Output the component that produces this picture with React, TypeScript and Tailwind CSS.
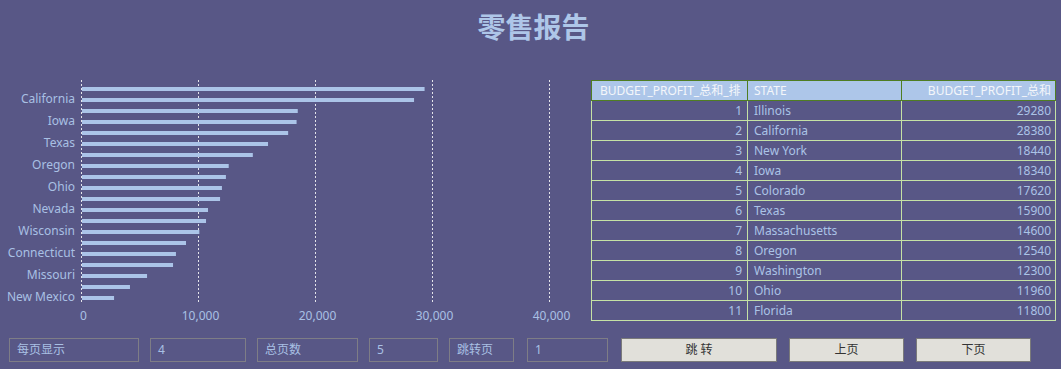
import React from "react";

const bars = [
  29280, 28380, 18440, 18340, 17620, 15900, 14600, 12540, 12300, 11960,
  11800, 10770, 10600, 10030, 8890, 8030, 7780, 5560, 4100, 2740,
];

const labels = [
  "California",
  "Iowa",
  "Texas",
  "Oregon",
  "Ohio",
  "Nevada",
  "Wisconsin",
  "Connecticut",
  "Missouri",
  "New Mexico",
];

const rows = [
  [1, "Illinois", 29280],
  [2, "California", 28380],
  [3, "New York", 18440],
  [4, "Iowa", 18340],
  [5, "Colorado", 17620],
  [6, "Texas", 15900],
  [7, "Massachusetts", 14600],
  [8, "Oregon", 12540],
  [9, "Washington", 12300],
  [10, "Ohio", 11960],
  [11, "Florida", 11800],
] as const;

const X0 = 81;
const PX = 117 / 10000;

function BarChart() {
  const ticks = [0, 10000, 20000, 30000, 40000];
  return (
    <svg width={591} height={258} viewBox="0 80 591 258" className="shrink-0">
      {ticks.map((t) => {
        const x = X0 + t * PX + 0.5;
        return (
          <g key={t}>
            <line x1={x} x2={x} y1={80} y2={302} stroke="#e4e4ea" strokeWidth={1} strokeDasharray="2 2" />
            <text x={x + 2} y={317} fill="#a9c0e4" fontSize={12} textAnchor="middle" dominantBaseline="middle">
              {t.toLocaleString("en-US")}
            </text>
          </g>
        );
      })}
      {bars.map((v, i) => (
        <rect key={i} x={X0 + 1} y={87 + i * 11} width={v * PX} height={4} fill="#abc4e8" />
      ))}
      {labels.map((l, i) => (
        <text
          key={l}
          x={75}
          y={100 + i * 22}
          fill="#a9c0e4"
          fontSize={12}
          textAnchor="end"
          dominantBaseline="middle"
        >
          {l}
        </text>
      ))}
    </svg>
  );
}

function Field({ text, w, ml }: { text: string; w: string; ml: string }) {
  return (
    <div className={`${w} ${ml} h-[24px] border border-[#7e7d86] pl-[7px] flex items-center text-[12px] text-[#a9c0e4] shrink-0`}>
      {text}
    </div>
  );
}

function Btn({ text, w, ml }: { text: string; w: string; ml: string }) {
  return (
    <button className={`${w} ${ml} h-[24px] border border-[#7a7a7a] bg-[#e1e0da] text-[12px] text-[#333] flex items-center justify-center shrink-0`}>
      {text}
    </button>
  );
}

export default function App() {
  return (
    <div
      className="w-[1061px] h-[369px] bg-[#585786] overflow-hidden flex flex-col"
      style={{ fontFamily: '"Noto Sans", "Noto Sans CJK SC", sans-serif' }}
    >
      <div className="h-[80px] pt-[9px] flex justify-center">
        <h1 className="text-[28px] leading-[36px] font-bold text-[#aec6e8] ml-[6px]">零售报告</h1>
      </div>

      <div className="h-[258px] flex">
        <BarChart />
        <div className="w-[464px]">
          <table className="w-full table-fixed border-collapse text-[12px] leading-none">
            <colgroup>
              <col className="w-[156px]" />
              <col className="w-[154px]" />
              <col className="w-[154px]" />
            </colgroup>
            <thead>
              <tr className="h-[20px] bg-[#adc6e9] text-[#f4f6fa]">
                <th className="border border-[#4f7d22] font-normal text-left pl-[8px] whitespace-nowrap overflow-hidden">
                  BUDGET_PROFIT_总和_排
                </th>
                <th className="border border-[#4f7d22] font-normal text-left pl-[6px]">STATE</th>
                <th className="border border-[#4f7d22] font-normal text-right pr-[4px] whitespace-nowrap overflow-hidden">
                  BUDGET_PROFIT_总和
                </th>
              </tr>
            </thead>
            <tbody className="text-[#abc3e6]">
              {rows.map(([n, s, v]) => (
                <tr key={n} className="h-[20px]">
                  <td className="border border-[#c5e2a5] text-right pr-[5px]">{n}</td>
                  <td className="border border-[#c5e2a5] text-left pl-[6px]">{s}</td>
                  <td className="border border-[#c5e2a5] text-right pr-[4px]">{v}</td>
                </tr>
              ))}
            </tbody>
          </table>
        </div>
      </div>

      <div className="h-[24px] flex">
        <Field text="每页显示" w="w-[130px]" ml="ml-[9px]" />
        <Field text="4" w="w-[96px]" ml="ml-[11px]" />
        <Field text="总页数" w="w-[101px]" ml="ml-[11px]" />
        <Field text="5" w="w-[69px]" ml="ml-[11px]" />
        <Field text="跳转页" w="w-[65px]" ml="ml-[11px]" />
        <Field text="1" w="w-[81px]" ml="ml-[13px]" />
        <Btn text="跳 转" w="w-[156px]" ml="ml-[13px]" />
        <Btn text="上页" w="w-[115px]" ml="ml-[12px]" />
        <Btn text="下页" w="w-[115px]" ml="ml-[12px]" />
      </div>
    </div>
  );
}
